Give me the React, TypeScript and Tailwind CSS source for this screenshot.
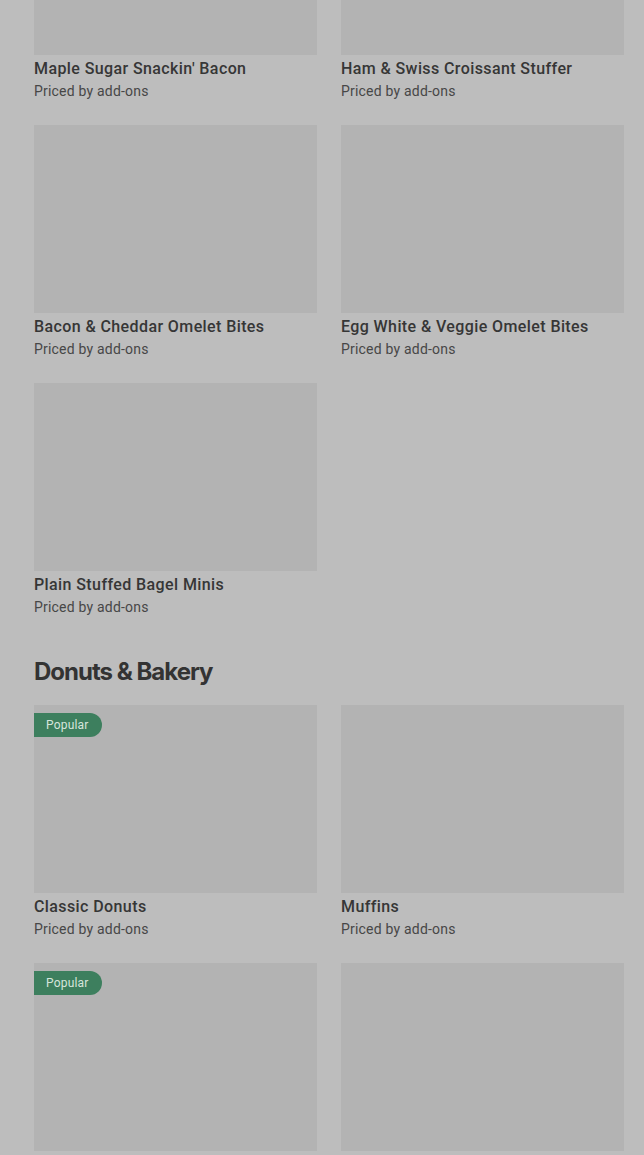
import React from "react";

type Item = { name: string; popular?: boolean };

function Card({ item, imageOnly }: { item: Item; imageOnly?: boolean }) {
  return (
    <div className="flex flex-col">
      <div className="relative h-[188px] bg-[#b3b3b3]">
        {item.popular && (
          <div className="absolute left-0 top-[8px] h-[24px] w-[68px] rounded-r-full bg-[#3d7f5e] pl-[12px] text-[12px] leading-[24px] tracking-[0.2px] text-[#d6e5dc]">
            Popular
          </div>
        )}
      </div>
      {!imageOnly && (
        <>
          <div className="mt-[4px] text-[16px] font-medium leading-[20px] tracking-[0.4px] text-[#363636]">{item.name}</div>
          <div className="mt-[2px] text-[14px] leading-[20px] tracking-[0.2px] text-[#474747]">Priced by add-ons</div>
        </>
      )}
    </div>
  );
}

export default function App() {
  const first: Item[] = [
    { name: "Maple Sugar Snackin' Bacon" },
    { name: "Ham & Swiss Croissant Stuffer" },
    { name: "Bacon & Cheddar Omelet Bites" },
    { name: "Egg White & Veggie Omelet Bites" },
    { name: "Plain Stuffed Bagel Minis" },
  ];
  const second: Item[] = [
    { name: "Classic Donuts", popular: true },
    { name: "Muffins" },
  ];
  const third: Item[] = [
    { name: "Munchkins", popular: true },
    { name: "Bagels" },
  ];
  return (
    <div
      className="h-[1155px] overflow-hidden bg-[#bdbdbd] pl-[34px] pr-[20px]"
      style={{ fontFamily: "Roboto, 'Noto Sans', sans-serif" }}
    >
      <div className="mt-[-133px] grid grid-cols-2 gap-x-[24px] gap-y-[24px]">
        {first.map((it) => (
          <Card key={it.name} item={it} />
        ))}
      </div>
      <h2
        className="mt-[39px] mb-[17px] text-[24px] font-bold leading-[32px] tracking-[-1px] text-[#333333]"
        style={{ fontFamily: "Inter, 'Noto Sans', sans-serif" }}
      >
        Donuts &amp; Bakery
      </h2>
      <div className="grid grid-cols-2 gap-x-[24px] gap-y-[24px]">
        {second.map((it) => (
          <Card key={it.name} item={it} />
        ))}
        {third.map((it) => (
          <Card key={it.name} item={it} imageOnly />
        ))}
      </div>
    </div>
  );
}
